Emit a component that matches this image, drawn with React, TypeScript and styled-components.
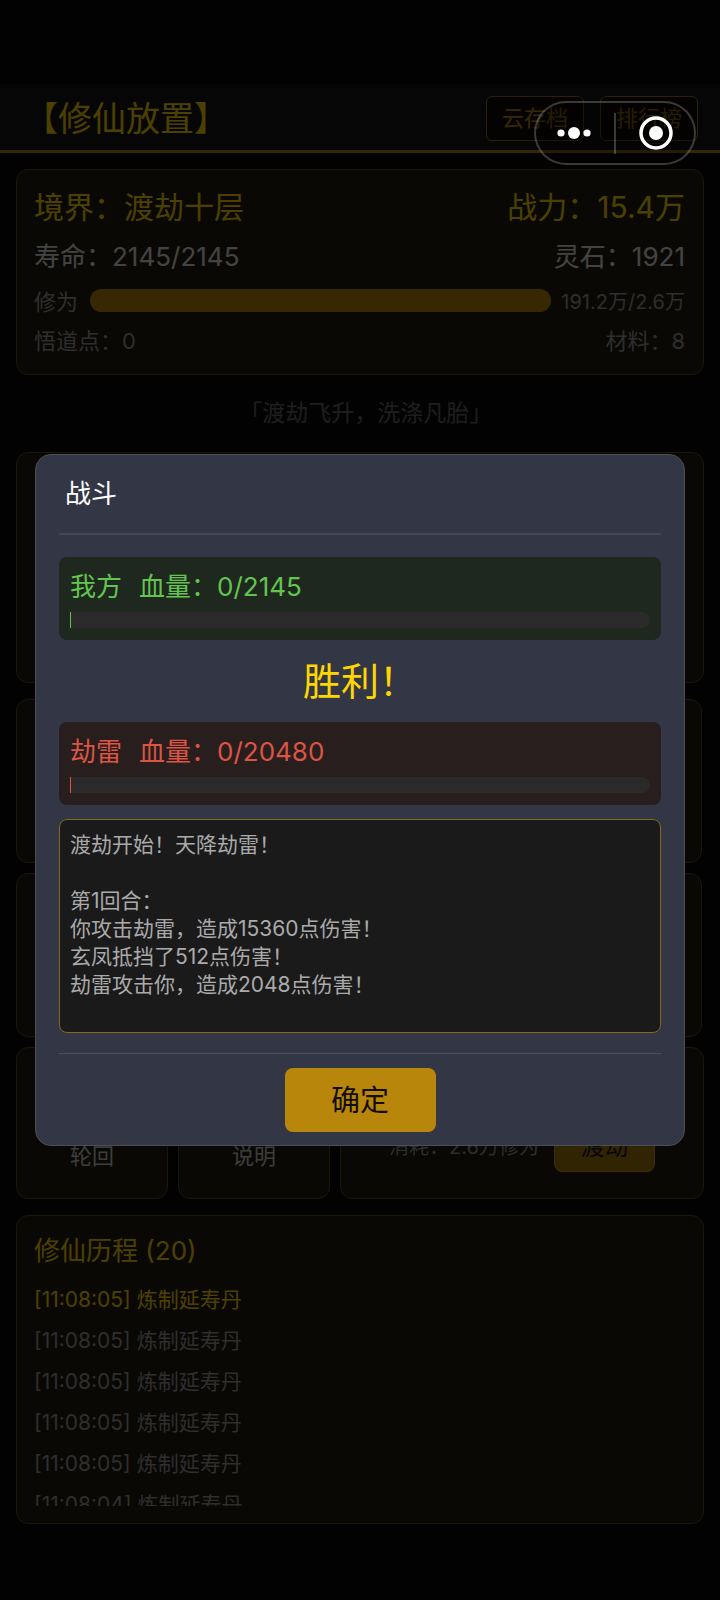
import React from "react";
import styled, { createGlobalStyle } from "styled-components";

const GlobalStyle = createGlobalStyle`
  * { box-sizing: border-box; }
  body {
    margin: 0;
    background: #080808;
    color: #e0e0e0;
    font-family: Inter, "Noto Sans CJK SC", sans-serif;
  }
  button { font-family: inherit; margin: 0; cursor: pointer; }
  h1, h2, p, ul { margin: 0; padding: 0; font-weight: 400; }
`;

const Page = styled.div`
  min-height: 100vh;
  display: flex;
  flex-direction: column;
`;

const Header = styled.header`
  display: flex;
  align-items: center;
  justify-content: space-between;
  margin-top: 84px;
  padding: 12px 22px 9px 24px;
  background: #151515;
  border-bottom: 3px solid #b8860b;
`;

const AppTitle = styled.h1`
  font-size: 34px;
  line-height: 45px;
  color: #ffd700;
`;

const HeaderActions = styled.div`
  display: flex;
  gap: 16px;
`;

const OutlineButton = styled.button`
  width: 98px;
  height: 45px;
  padding: 0;
  border: 1px solid #8f6a14;
  border-radius: 6px;
  background: #0f0d08;
  color: #b8860b;
  font-size: 22px;
  line-height: 41px;
`;

const Main = styled.main`
  display: flex;
  flex-direction: column;
  gap: 16px;
  padding: 16px 16px 76px;
`;

const Card = styled.section`
  border: 1px solid #5e4b1a;
  border-radius: 12px;
  background: #211c10;
`;

const StatsCard = styled(Card)`
  padding: 15px 18px 13px 17px;
`;

const StatRow = styled.div<{ $size: number; $height: number; $color: string }>`
  display: flex;
  align-items: center;
  justify-content: space-between;
  height: ${(p) => p.$height}px;
  font-size: ${(p) => p.$size}px;
  color: ${(p) => p.$color};
`;

const ExpBar = styled.div`
  flex: 1;
  height: 23px;
  margin: 0 10px 0 12px;
  border-radius: 12px;
  background: #b8860b;
`;

const ExpText = styled.span`
  font-size: 20px;
`;

const Quote = styled.p`
  font-size: 23px;
  line-height: 45px;
  text-align: center;
  color: #666;
`;

const HalfWidth = styled.span`
  font-feature-settings: "halt";
`;

const ScenePanel = styled(Card)`
  height: 231px;
`;

const TileArea = styled.div`
  display: flex;
  flex-direction: column;
  gap: 10px;
`;

const TileGrid = styled.div`
  display: grid;
  grid-template-columns: repeat(4, 1fr);
  gap: 10px;
  padding-right: 2px;
`;

const Tile = styled(Card)`
  aspect-ratio: 1;
`;

const ActionRow = styled.div`
  display: flex;
  gap: 10px;
`;

const ActionTile = styled.button`
  display: flex;
  align-items: flex-end;
  justify-content: center;
  width: 152px;
  height: 152px;
  padding: 0 0 27px;
  border: 1px solid #5e4b1a;
  border-radius: 12px;
  background: #211c10;
  color: #ccc;
  font-size: 22px;
  line-height: 30px;
`;

const TrialCard = styled(Card)`
  flex: 1;
  display: flex;
  align-items: flex-end;
  justify-content: center;
  gap: 15px;
  padding-bottom: 26px;
`;

const TrialCost = styled.span`
  font-size: 20px;
  line-height: 50px;
  color: #999;
`;

const TrialButton = styled.button`
  width: 101px;
  height: 50px;
  padding: 0;
  border: 1px solid #c8961b;
  border-radius: 8px;
  background: #a5780a;
  color: #1a1a1a;
  font-size: 24px;
  line-height: 44px;
`;

const HistoryCard = styled(Card)`
  padding: 17px;
`;

const HistoryTitle = styled.h2`
  font-size: 26px;
  line-height: 36px;
  margin-bottom: 10px;
  color: #ffd700;
`;

const HistoryList = styled.ul`
  height: 227px;
  overflow: hidden;
  list-style: none;
`;

const HistoryItem = styled.li<{ $latest?: boolean }>`
  font-size: 21px;
  line-height: 41px;
  color: ${(p) => (p.$latest ? "#ffd700" : "#999")};
`;

const Mask = styled.div`
  position: fixed;
  inset: 0;
  display: flex;
  align-items: center;
  justify-content: center;
  padding: 0 35px;
  background: rgba(0, 0, 0, 0.7);
`;

const Dialog = styled.div`
  flex: 1;
  display: flex;
  flex-direction: column;
  padding: 0 23px 13px;
  border: 1px solid #4b4d57;
  border-radius: 16px;
  background: #323645;
`;

const DialogTitle = styled.h2`
  padding: 0 6px;
  font-size: 26px;
  line-height: 78px;
  color: #fff;
  border-bottom: 2px solid #434756;
  margin-bottom: 22px;
`;

const Fighter = styled.div<{ $bg: string; $color: string }>`
  padding: 12px 11px;
  border-radius: 8px;
  background: ${(p) => p.$bg};
  color: ${(p) => p.$color};
`;

const FighterName = styled.div`
  display: flex;
  gap: 17px;
  font-size: 26px;
  line-height: 36px;
  margin-bottom: 7px;
`;

const HealthTrack = styled.div`
  height: 16px;
  border-radius: 0 8px 8px 0;
  background: #2a2a2a;
`;

const HealthFill = styled.div`
  min-width: 1px;
  height: 16px;
  background: currentColor;
`;

const Verdict = styled.p`
  font-size: 38px;
  line-height: 82px;
  text-align: center;
  color: #ffd700;
`;

const BattleLog = styled.div`
  height: 214px;
  margin-top: 14px;
  padding: 11px 10px;
  overflow: hidden;
  border: 1px solid #84681f;
  border-radius: 8px;
  background: #1a1a1a;
  color: #aaa;
  font-size: 21px;
  line-height: 28px;
  white-space: pre-line;
`;

const DialogFooter = styled.footer`
  display: flex;
  justify-content: center;
  margin-top: 20px;
  padding-top: 14px;
  border-top: 1px solid #4b4f5b;
`;

const ConfirmButton = styled.button`
  width: 151px;
  height: 64px;
  padding: 0 0 4px;
  border: 0;
  border-radius: 8px;
  background: #b8860b;
  color: #120c02;
  font-size: 29px;
`;

const Capsule = styled.div`
  position: fixed;
  top: 101px;
  right: 24px;
  display: flex;
  align-items: center;
  justify-content: space-between;
  width: 162px;
  height: 64px;
  border: 2px solid rgba(255, 255, 255, 0.22);
  border-radius: 32px;
  background: rgba(0, 0, 0, 0.3);
`;

const CapsuleButton = styled.button`
  display: flex;
  align-items: center;
  justify-content: center;
  width: 76px;
  height: 60px;
  padding: 0;
  border: 0;
  background: none;
`;

const CapsuleDivider = styled.span`
  width: 2px;
  height: 41px;
  background: rgba(255, 255, 255, 0.22);
`;

const logText = `渡劫开始！天降劫雷！

第1回合：
你攻击劫雷，造成15360点伤害！
玄凤抵挡了512点伤害！
劫雷攻击你，造成2048点伤害！`;

const history = ["11:08:05", "11:08:05", "11:08:05", "11:08:05", "11:08:05", "11:08:04"];

function FighterPanel(props: { name: string; hp: number; max: number; bg: string; color: string }) {
  return (
    <Fighter $bg={props.bg} $color={props.color}>
      <FighterName>
        <span>{props.name}</span>
        <span>血量：{props.hp}/{props.max}</span>
      </FighterName>
      <HealthTrack>
        <HealthFill style={{ width: `${(props.hp / props.max) * 100}%` }} />
      </HealthTrack>
    </Fighter>
  );
}

export default function App() {
  return (
    <>
      <GlobalStyle />
      <Page>
        <Header>
          <AppTitle>【修仙放置】</AppTitle>
          <HeaderActions>
            <OutlineButton>云存档</OutlineButton>
            <OutlineButton>排行榜</OutlineButton>
          </HeaderActions>
        </Header>
        <Main>
          <StatsCard>
            <StatRow $size={30} $height={40} $color="#ffd700">
              <span>境界：渡劫十层</span>
              <span>战力：15.4万</span>
            </StatRow>
            <StatRow $size={26} $height={58} $color="#e0e0e0">
              <span>寿命：2145/2145</span>
              <span>灵石：1921</span>
            </StatRow>
            <StatRow $size={22} $height={34} $color="#999">
              <span>修为</span>
              <ExpBar />
              <ExpText>191.2万/2.6万</ExpText>
            </StatRow>
            <StatRow $size={22} $height={44} $color="#999">
              <span>悟道点：0</span>
              <span>材料：8</span>
            </StatRow>
          </StatsCard>
          <Quote>
            「渡劫飞升，洗涤凡胎<HalfWidth>」</HalfWidth>
          </Quote>
          <ScenePanel />
          <TileArea>
            <TileGrid>
              {Array.from({ length: 8 }, (_, i) => (
                <Tile key={i} />
              ))}
            </TileGrid>
            <ActionRow>
              <ActionTile>轮回</ActionTile>
              <ActionTile>说明</ActionTile>
              <TrialCard>
                <TrialCost>消耗：2.6万修为</TrialCost>
                <TrialButton>渡劫</TrialButton>
              </TrialCard>
            </ActionRow>
          </TileArea>
          <HistoryCard>
            <HistoryTitle>修仙历程 (20)</HistoryTitle>
            <HistoryList>
              {history.map((time, i) => (
                <HistoryItem key={i} $latest={i === 0}>
                  [{time}] 炼制延寿丹
                </HistoryItem>
              ))}
            </HistoryList>
          </HistoryCard>
        </Main>
      </Page>
      <Mask>
        <Dialog role="dialog" aria-modal="true" aria-labelledby="battle-title">
          <DialogTitle id="battle-title">战斗</DialogTitle>
          <FighterPanel name="我方" hp={0} max={2145} bg="#1e281e" color="#63c550" />
          <Verdict>胜利！</Verdict>
          <FighterPanel name="劫雷" hp={0} max={20480} bg="#281e1e" color="#dc5544" />
          <BattleLog>{logText}</BattleLog>
          <DialogFooter>
            <ConfirmButton>确定</ConfirmButton>
          </DialogFooter>
        </Dialog>
      </Mask>
      <Capsule>
        <CapsuleButton aria-label="更多">
          <svg width="36" height="16" viewBox="0 0 36 16" fill="#fff">
            <circle cx="5" cy="8" r="3.6" />
            <circle cx="18" cy="8" r="6" />
            <circle cx="31" cy="8" r="3.6" />
          </svg>
        </CapsuleButton>
        <CapsuleDivider />
        <CapsuleButton aria-label="关闭">
          <svg width="36" height="36" viewBox="0 0 36 36">
            <circle cx="18" cy="18" r="15" fill="none" stroke="#fff" strokeWidth="3.5" />
            <circle cx="18" cy="18" r="7" fill="#fff" />
          </svg>
        </CapsuleButton>
      </Capsule>
    </>
  );
}
